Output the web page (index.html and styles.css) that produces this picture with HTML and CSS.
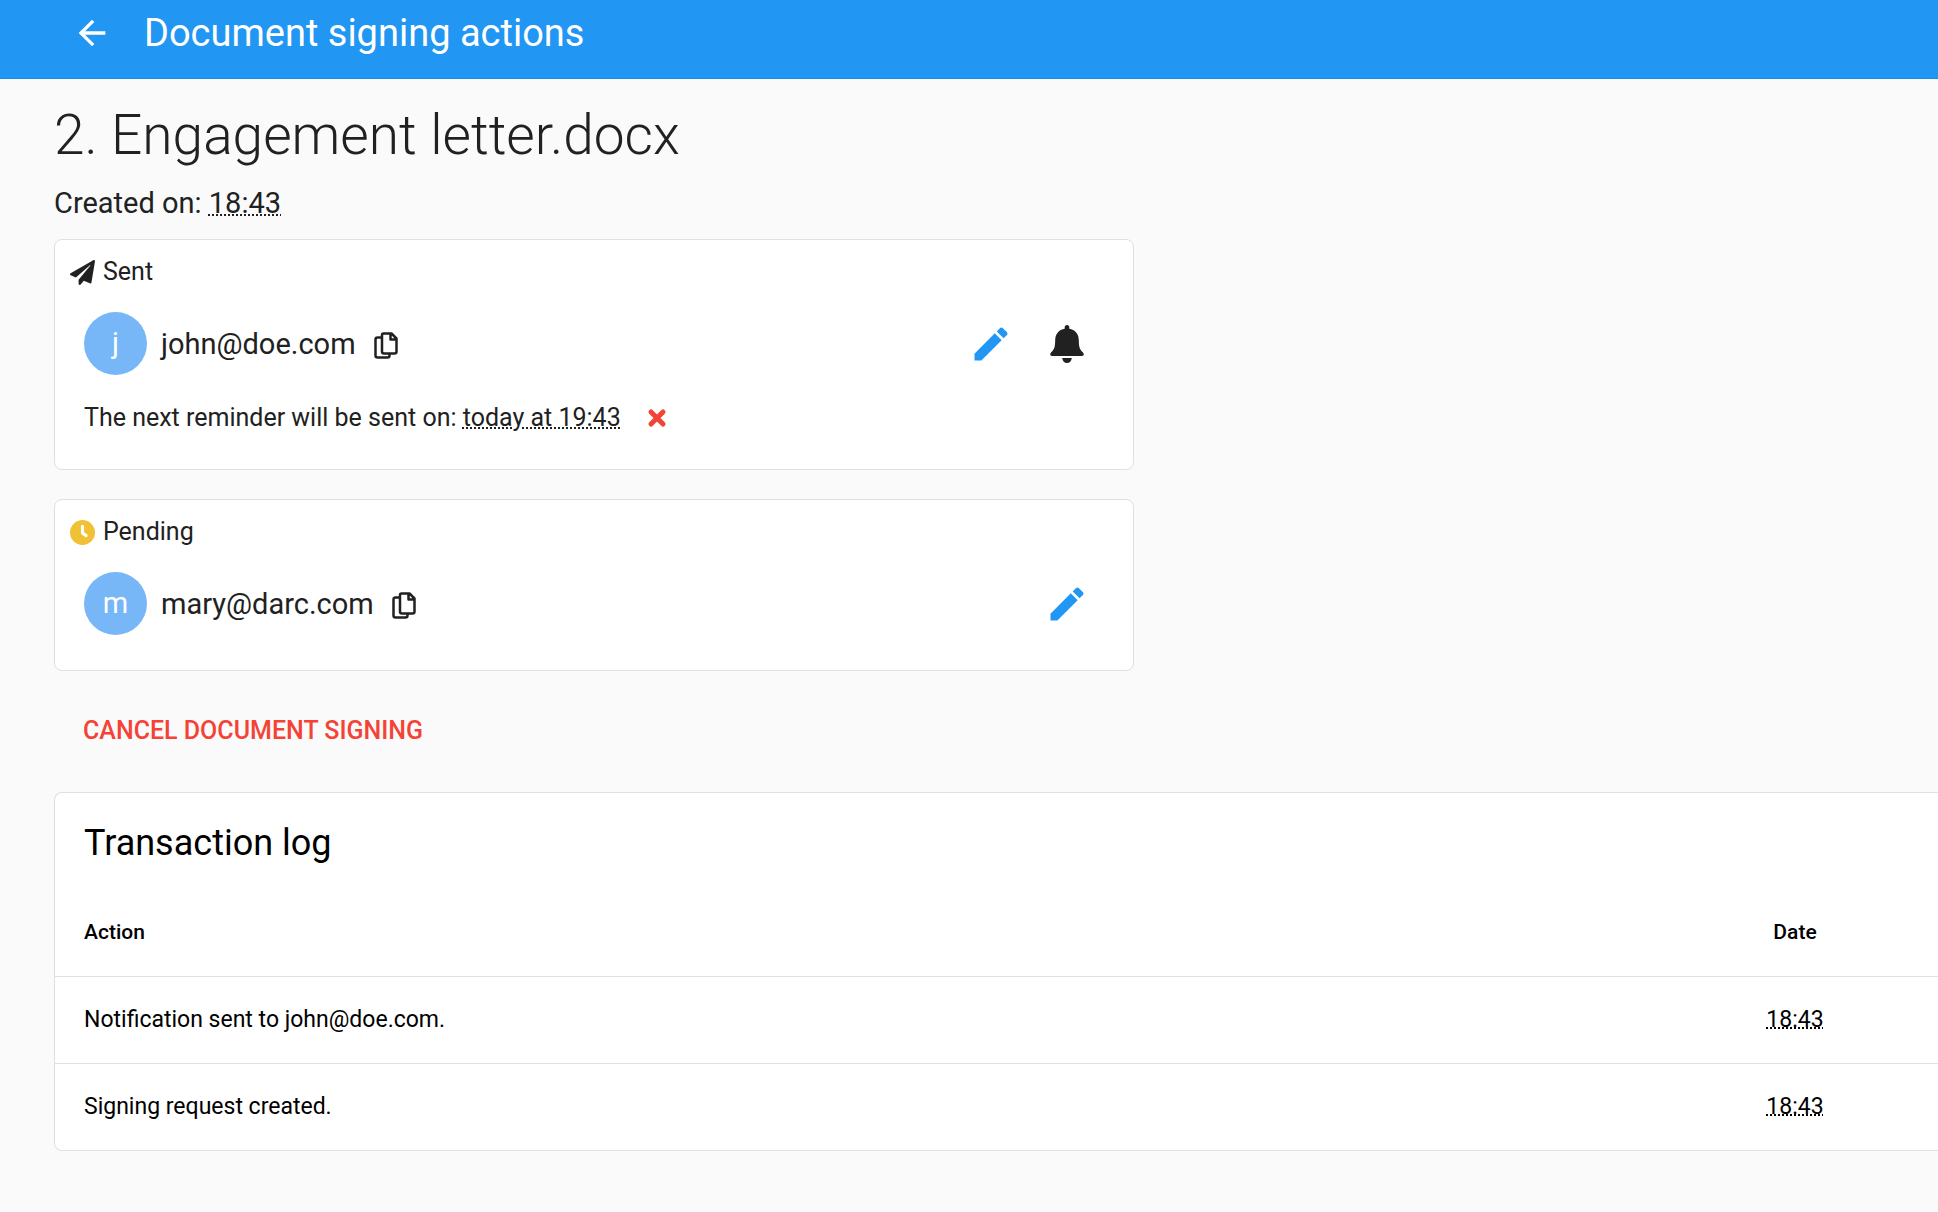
FILE: index.html
```html
<!DOCTYPE html>
<html lang="en">
<head>
    <meta charset="UTF-8">
    <meta name="viewport" content="width=device-width, initial-scale=1.0">
    <title>Document signing actions</title>
    <link rel="stylesheet" href="styles.css">
</head>
<body>
    <header class="toolbar">
        <a class="back" href="#" aria-label="Back">
            <svg class="icon-back" viewBox="0 0 24 24"><path d="M20 11H7.83l5.59-5.59L12 4l-8 8 8 8 1.41-1.41L7.83 13H20v-2z"/></svg>
        </a>
        <span class="toolbar-title">Document signing actions</span>
    </header>
    <main class="content">
        <h1>2. Engagement letter.docx</h1>
        <p class="created">Created on: <abbr>18:43</abbr></p>

        <section class="card signer">
            <div class="status">
                <svg class="icon-status" viewBox="0 0 512 512"><path d="M476 3.2L12.5 270.6c-18.1 10.4-15.8 35.6 2.2 43.2L121 358.4l287.3-253.2c5.5-4.9 13.3 2.6 8.6 8.3L176 407v80.5c0 23.6 28.5 32.9 42.5 15.8L282 426l124.6 52.2c14.2 6 30.4-2.9 33-18.2l72-432C515 7.8 493.3-6.8 476 3.2z"/></svg>
                Sent
            </div>
            <div class="person">
                <span class="avatar">j</span>
                <span class="email">john@doe.com</span>
                <button class="btn-copy" aria-label="Copy email">
                    <svg class="icon-copy" viewBox="0 0 24 27"><path stroke-width="2.5" d="M9.500 1.500H17.500L22.500 6.500V19.500Q22.500 21.500 20.500 21.500H10Q8 21.500 8 19.500V3Q8 1.500 9.500 1.500ZM16.500 1.500V7.500H22.500M8 5.500H3.500Q1.500 5.500 1.500 7.500V23.500Q1.500 25.500 3.500 25.500H13.500Q15.500 25.500 15.500 23.500V21.500"/></svg>
                </button>
                <button class="btn-icon push" aria-label="Edit signer">
                    <svg class="icon-edit" viewBox="0 0 24 24"><path d="M3 17.250V21h3.750L17.810 9.940l-3.750-3.750L3 17.250zM20.710 7.040c.39-.39.39-1.020 0-1.410l-2.340-2.340c-.39-.39-1.020-.39-1.410 0l-1.830 1.830 3.750 3.750 1.830-1.830z"/></svg>
                </button>
                <button class="btn-icon" aria-label="Send reminder">
                    <svg class="icon-bell" viewBox="0 0 34 38"><path d="M17 0C18.500 0 19.300 1 19.300 2.300V3.700C25 4.500 28.700 9 28.800 15C28.900 23 30 24.500 33 27.500C34.500 29.200 33.700 31 31.800 31H2.200C.3 31-.5 29.200 1 27.500C4 24.500 5.100 23 5.200 15C5.300 9 9 4.500 14.700 3.700V2.300C14.700 1 15.500 0 17 0ZM12.200 33H21.800C21.500 36 19.600 38 17 38C14.400 38 12.500 36 12.200 33Z"/></svg>
                </button>
            </div>
            <div class="reminder">
                <span>The next reminder will be sent on: <abbr>today at 19:43</abbr></span>
                <button class="btn-remove" aria-label="Remove reminder">
                    <svg class="icon-remove" viewBox="0 0 20 20"><path d="M4 4L16 16M16 4L4 16"/></svg>
                </button>
            </div>
        </section>

        <section class="card signer">
            <div class="status">
                <svg class="icon-status pending" viewBox="0 0 24 24"><circle cx="12" cy="12" r="12"/><path d="M12 6V12.500L15.500 15"/></svg>
                Pending
            </div>
            <div class="person">
                <span class="avatar">m</span>
                <span class="email">mary@darc.com</span>
                <button class="btn-copy" aria-label="Copy email">
                    <svg class="icon-copy" viewBox="0 0 24 27"><path stroke-width="2.5" d="M9.500 1.500H17.500L22.500 6.500V19.500Q22.500 21.500 20.500 21.500H10Q8 21.500 8 19.500V3Q8 1.500 9.500 1.500ZM16.500 1.500V7.500H22.500M8 5.500H3.500Q1.500 5.500 1.500 7.500V23.500Q1.500 25.500 3.500 25.500H13.500Q15.500 25.500 15.500 23.500V21.500"/></svg>
                </button>
                <button class="btn-icon push" aria-label="Edit signer">
                    <svg class="icon-edit" viewBox="0 0 24 24"><path d="M3 17.250V21h3.750L17.810 9.940l-3.750-3.750L3 17.250zM20.710 7.040c.39-.39.39-1.020 0-1.410l-2.340-2.340c-.39-.39-1.020-.39-1.410 0l-1.830 1.830 3.750 3.750 1.830-1.830z"/></svg>
                </button>
            </div>
        </section>

        <button class="btn-cancel">CANCEL DOCUMENT SIGNING</button>

        <section class="card log">
            <h2>Transaction log</h2>
            <table>
                <thead>
                    <tr>
                        <th>Action</th>
                        <th class="date">Date</th>
                    </tr>
                </thead>
                <tbody>
                    <tr>
                        <td>Notification sent to john@doe.com.</td>
                        <td class="date"><abbr>18:43</abbr></td>
                    </tr>
                    <tr>
                        <td>Signing request created.</td>
                        <td class="date"><abbr>18:43</abbr></td>
                    </tr>
                </tbody>
            </table>
        </section>
    </main>
</body>
</html>
```
FILE: styles.css
```css
* {
    box-sizing: border-box;
}
body {
    margin: 0;
    background-color: #fafafa;
    color: #212121;
    font-family: Roboto, sans-serif;
    font-size: 25px;
    line-height: 32px;
}
button {
    padding: 0;
    border: none;
    background: none;
    color: inherit;
    font-family: inherit;
    cursor: pointer;
}
svg {
    display: block;
    fill: currentColor;
}
abbr {
    text-decoration: underline dotted 2px;
}

/* Toolbar */
.toolbar {
    display: flex;
    align-items: center;
    gap: 32px;
    padding: 8px 72px 20px;
    border-bottom: 1px solid #1e88e5;
    background-color: #2196f3;
    color: #fff;
}
.back {
    color: inherit;
}
.icon-back {
    width: 40px;
    height: 40px;
}
.toolbar-title {
    font-size: 38px;
    line-height: 50px;
}

.content {
    padding-left: 54px;
}
h1 {
    margin: 20px 0 0;
    font-size: 55px;
    font-weight: 300;
    line-height: 72px;
}
.created {
    margin: 12px 0 16px;
    font-size: 29px;
    line-height: 40px;
}

/* Cards */
.card {
    border: 1px solid #e0e0e0;
    border-radius: 8px;
    background-color: #fff;
}
.signer {
    max-width: 1080px;
    margin-bottom: 29px;
    padding: 16px 28px 35px 29px;
}
.status {
    display: flex;
    align-items: center;
    gap: 8px;
    margin-left: -14px;
}
.icon-status {
    width: 25px;
    height: 25px;
}
.pending {
    fill: #f0c035;
}
.pending path {
    fill: none;
    stroke: #fff;
    stroke-width: 3;
    stroke-linecap: round;
    stroke-linejoin: round;
}
.person {
    display: flex;
    align-items: center;
    margin-top: 24px;
}
.avatar {
    width: 63px;
    height: 63px;
    margin-right: 14px;
    border-radius: 50%;
    background-color: #77b6f7;
    color: #fff;
    font-size: 29px;
    line-height: 63px;
    text-align: center;
}
.email {
    margin-right: 18px;
    font-size: 29px;
}
.btn-copy {
    padding-top: 4px;
}
.icon-copy {
    width: 24px;
    height: 27px;
    fill: none;
    stroke: currentColor;
    stroke-linejoin: round;
}
.btn-icon {
    display: flex;
    justify-content: center;
    width: 76px;
}
.push {
    margin-left: auto;
    color: #2196f3;
}
.icon-edit {
    width: 44px;
    height: 44px;
}
.icon-bell {
    width: 34px;
    height: 38px;
}
.reminder {
    display: flex;
    align-items: center;
    gap: 26px;
    margin-top: 27px;
}
.icon-remove {
    width: 20px;
    height: 20px;
    fill: none;
    stroke: #f44336;
    stroke-width: 5;
    stroke-linecap: round;
}
.btn-cancel {
    display: block;
    margin: 43px 0 44px 29px;
    color: #f44336;
    font-size: 25px;
    font-weight: 500;
    line-height: 34px;
}

/* Transaction log, runs to the edge of the window */
.log {
    border-right: none;
    border-radius: 8px 0 0 8px;
    color: #000;
}
h2 {
    margin: 26px 0 22px 29px;
    font-size: 36px;
    font-weight: 400;
    line-height: 48px;
}
table {
    width: 100%;
    border-collapse: collapse;
}
th, td {
    height: 87px;
    padding: 0 29px;
    border-bottom: 1px solid #e0e0e0;
    font-size: 23px;
    text-align: left;
}
th {
    font-size: 21px;
    font-weight: 500;
}
tr:last-child td {
    border-bottom: none;
}
.date {
    width: 286px;
    padding: 0;
    text-align: center;
}
```
